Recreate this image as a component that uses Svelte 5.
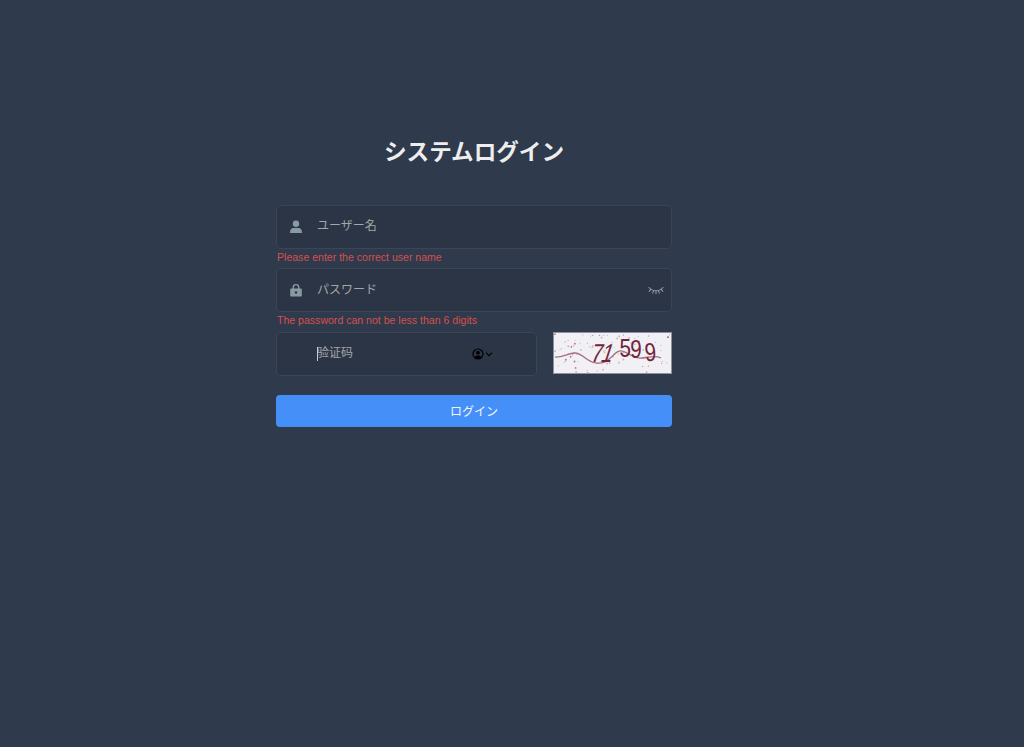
<script>
	// fixed noise dots for the captcha picture
	const dots = Array.from({ length: 85 }, (_, i) => {
		const a = Math.sin(i * 12.9898) * 43758.5453;
		const b = Math.sin(i * 78.233) * 24634.6345;
		return {
			x: (a - Math.floor(a)) * 116 + 1,
			y: (b - Math.floor(b)) * 40 + 1,
			r: i % 3 === 0 ? 0.9 : 0.6,
			o: i % 4 === 0 ? 0.75 : 0.4
		};
	});

	const digits = [
		{ ch: '7', x: 36, y: 29, skew: -14 },
		{ ch: '1', x: 46, y: 29, skew: -18 },
		{ ch: '5', x: 66, y: 24, skew: 0 },
		{ ch: '9', x: 77, y: 25, skew: 0 },
		{ ch: '9', x: 92, y: 28, skew: 4 }
	];
</script>

<div class="login-container">
	<form class="login-form" on:submit|preventDefault>
		<h3 class="title">システムログイン</h3>

		<div class="form-item">
			<div class="input-box">
				<span class="svg-container">
					<svg viewBox="0 0 14 14" width="14" height="14"><circle cx="7" cy="3.8" r="3.2" fill="currentColor" /><path d="M1 13c0-3.6 1.6-5 3.4-5h5.2c1.8 0 3.4 1.4 3.4 5z" fill="currentColor" /></svg>
				</span>
				<input type="text" placeholder="ユーザー名" />
			</div>
			<div class="error">Please enter the correct user name</div>
		</div>

		<div class="form-item">
			<div class="input-box">
				<span class="svg-container">
					<svg viewBox="0 0 14 14" width="14" height="14"><path d="M3.6 6V4.3a3.4 3.4 0 0 1 6.8 0V6H9V4.3a2 2 0 0 0-4 0V6z" fill="currentColor" /><path fill-rule="evenodd" d="M2.2 5.6h9.6c.6 0 1 .4 1 1v6c0 .6-.4 1-1 1H2.200c-.6 0-1-.4-1-1v-6c0-.6.4-1 1-1zM7 8.200a1.300 1.300 0 1 0 0 2.600 1.300 1.300 0 0 0 0-2.600z" fill="currentColor" /></svg>
				</span>
				<input type="password" placeholder="パスワード" />
				<span class="show-pwd">
					<svg viewBox="0 0 16 10" width="16" height="10" fill="none" stroke="currentColor" stroke-width="1.100" stroke-linecap="round"><path d="M1 1.500c2 2.400 4.400 3.300 7 3.300s5-.9 7-3.300" /><path d="M2.800 3.300 1.200 5.300M5.600 4.500 4.800 7.100M8 4.800v2.700M10.400 4.500l.8 2.600M13.200 3.300l1.600 2" /></svg>
				</span>
			</div>
			<div class="error">The password can not be less than 6 digits</div>
		</div>

		<div class="captcha-row">
			<div class="input-box captcha-input">
				<input class="code" type="text" placeholder="验证码" />
				<span class="caret"></span>
				<span class="autofill">
					<svg viewBox="0 0 12 12" width="12" height="12"><circle cx="6" cy="6" r="5" fill="none" stroke="#000" stroke-width="1.200" /><circle cx="6" cy="4.700" r="1.900" fill="#000" /><path d="M2.600 9.400C3.200 7.900 4.400 7.400 6 7.400s2.800.5 3.400 2C8.600 10.400 7.400 11 6 11s-2.600-.6-3.400-1.600z" fill="#000" /></svg>
					<svg viewBox="0 0 8 8" width="8" height="8" fill="none" stroke="#000" stroke-width="1.200"><path d="M1 2.600 4 5.600 7 2.600" /></svg>
				</span>
			</div>
			<div class="captcha">
				<svg viewBox="0 0 118 42" width="118" height="42">
					{#each dots as d}
						<circle cx={d.x} cy={d.y} r={d.r} fill="#a04a62" opacity={d.o} />
					{/each}
					<path d="M1 24c7 1 13-4 20-4 8 0 12 9 21 10 8 1 12-2 16-6 4-4 7-7 11-6 5 1 9 6 16 7 8 1 15-4 23 0" fill="none" stroke="#a8707e" stroke-width="1.300" />
					{#each digits as d}
						<text class="digit" transform="translate({d.x} {d.y}) skewX({d.skew}) scale(0.8 1)">{d.ch}</text>
					{/each}
				</svg>
			</div>
		</div>

		<button class="login-btn" type="submit">ログイン</button>
	</form>
</div>

<style>
	:global(body) {
		background: #2f3a4c;
	}

	.login-container {
		min-height: 747px;
		background: #2f3a4c;
		font-family: "Liberation Sans", "Noto Sans CJK JP", sans-serif;
		overflow: hidden;
	}

	.login-form {
		width: 396px;
		margin-left: 276px;
		padding-top: 136px;
	}

	.title {
		margin: 0 0 34.8px;
		font-size: 22.6px;
		line-height: 34px;
		font-weight: 700;
		color: #eee;
		text-align: center;
	}

	.input-box {
		position: relative;
		display: flex;
		align-items: center;
		height: 44px;
		box-sizing: border-box;
		background: #2c3545;
		border: 1px solid #3b4556;
		border-radius: 5px;
	}

	.svg-container {
		display: flex;
		justify-content: center;
		width: 38px;
		color: #889aa4;
	}

	input {
		flex: 1;
		min-width: 0;
		height: 100%;
		padding: 0 0 1px 2px;
		background: transparent;
		border: 0;
		outline: 0;
		font: 12px "Liberation Sans", "Noto Sans CJK JP", sans-serif;
		color: #fff;
	}

	input::placeholder {
		color: #a3a6ab;
		opacity: 1;
	}

	.error {
		height: 19.5px;
		padding-left: 1px;
		font-size: 10.55px;
		line-height: 17px;
		color: #d4504e;
	}

	.show-pwd {
		position: absolute;
		right: 7px;
		top: 17px;
		display: flex;
		color: #889aa4;
	}

	.captcha-row {
		display: flex;
		justify-content: space-between;
		align-items: flex-start;
	}

	.captcha-input {
		width: 261px;
	}

	input.code {
		padding-left: 40px;
	}

	.caret {
		position: absolute;
		left: 40px;
		top: 14px;
		width: 1px;
		height: 14px;
		background: #c8ccd2;
	}

	.autofill {
		position: absolute;
		left: 195px;
		top: 15px;
		display: flex;
		align-items: center;
		gap: 1px;
	}

	.captcha {
		width: 119px;
		height: 42px;
		box-sizing: border-box;
		background: #f0f0f5;
		border: 1px solid #8d939d;
		display: flex;
		overflow: hidden;
	}

	.digit {
		font-family: "Liberation Sans", sans-serif;
		font-size: 26px;
		fill: #72263a;
	}

	.login-btn {
		display: block;
		width: 100%;
		height: 32px;
		margin-top: 19px;
		padding: 0;
		background: #4590f8;
		border: 0;
		border-radius: 4px;
		font: 12px "Liberation Sans", "Noto Sans CJK JP", sans-serif;
		color: #f2f6fc;
	}
</style>
